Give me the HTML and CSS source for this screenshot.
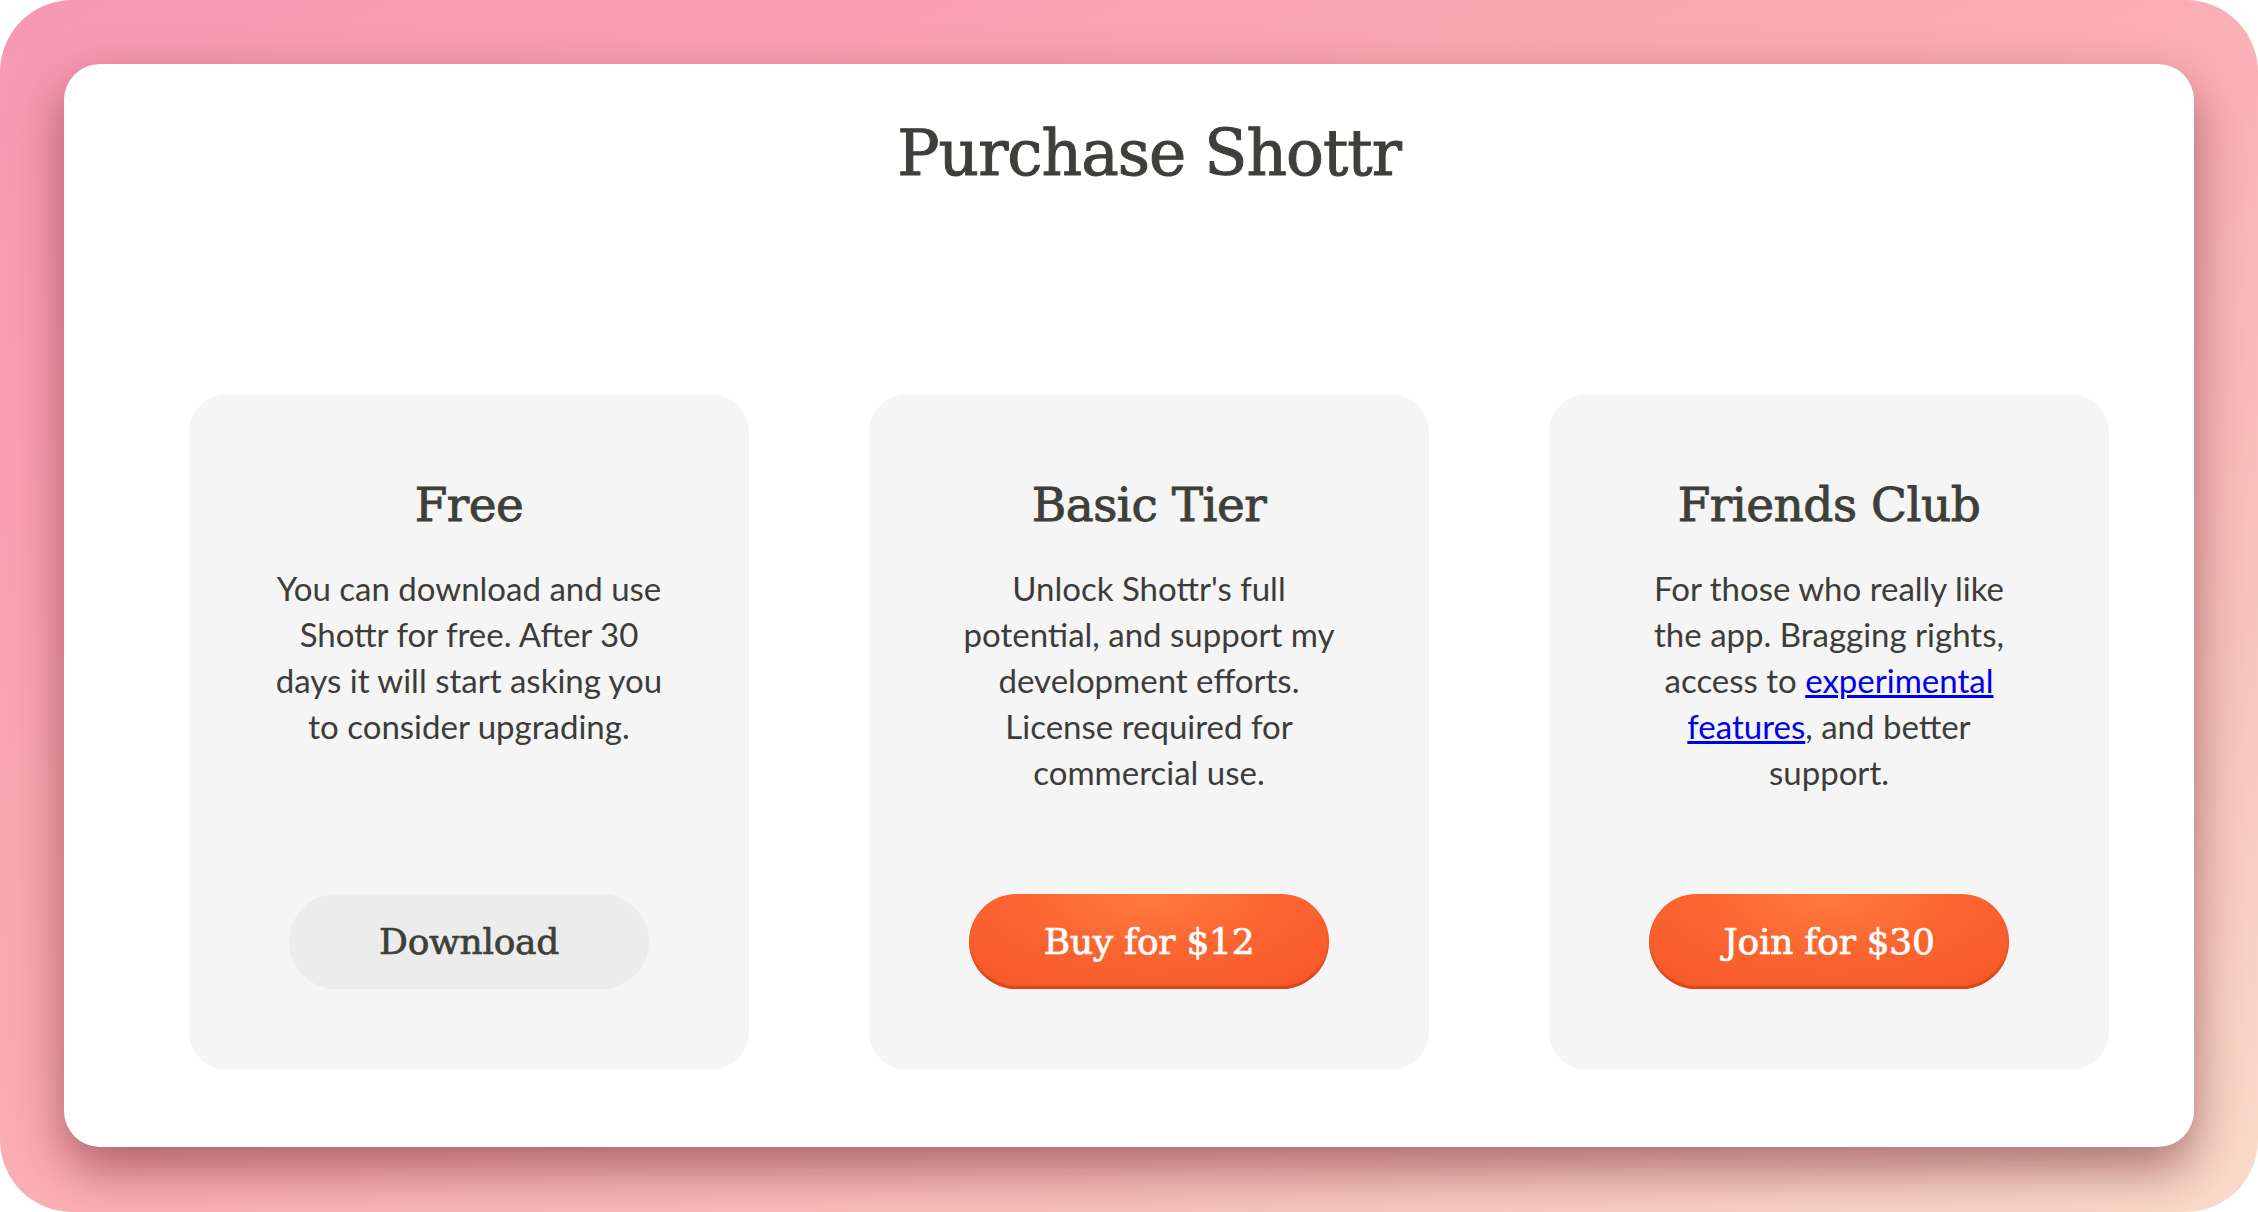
FILE: index.html
```html
<!DOCTYPE html>
<html lang="en">
<head>
<meta charset="utf-8">
<title>Purchase Shottr</title>
<link rel="stylesheet" href="styles.css">
</head>
<body>
<div class="frame">
  <div class="window">
    <h1 class="title">Purchase Shottr</h1>
    <div class="tiers">
      <div class="tier">
        <h2 class="tier-name">Free</h2>
        <p class="tier-text">You can download and use Shottr for free. After 30 days it will start asking you to consider upgrading.</p>
        <a class="btn btn-grey">Download</a>
      </div>
      <div class="tier">
        <h2 class="tier-name">Basic Tier</h2>
        <p class="tier-text">Unlock Shottr's full potential, and support my development efforts. License required for commercial use.</p>
        <a class="btn btn-orange">Buy for $12</a>
      </div>
      <div class="tier">
        <h2 class="tier-name">Friends Club</h2>
        <p class="tier-text">For those who really like the app. Bragging rights, access to <a class="link" href="#">experimental features</a>, and better support.</p>
        <a class="btn btn-orange">Join for $30</a>
      </div>
    </div>
  </div>
</div>
</body>
</html>
```

FILE: styles.css
```css
html, body {
  margin: 0;
  padding: 0;
  background: #ffffff;
}

.frame {
  width: 2258px;
  height: 1212px;
  box-sizing: border-box;
  padding: 64px 64px 65px 64px;
  border-radius: 72px;
  background: linear-gradient(to bottom right, #f798b1 0%, #fbabb4 45%, #f9c3bd 75%, #fadccb 100%);
  overflow: hidden;
}

.window {
  height: 100%;
  box-sizing: border-box;
  background: #ffffff;
  border-radius: 36px;
  box-shadow: 0 22px 50px rgba(110, 30, 40, 0.55);
  padding: 48px 85px 0 125px;
  display: flex;
  flex-direction: column;
}

.title {
  margin: 0;
  text-align: center;
  font-family: "DejaVu Serif", serif;
  font-weight: normal;
  font-size: 63px;
  line-height: 84px;
  color: #3e3f3a;
  letter-spacing: -1px;
  -webkit-text-stroke: 1px #3e3f3a;
}

.tiers {
  margin-top: 198px;
  display: grid;
  grid-template-columns: repeat(3, 560px);
  column-gap: 120px;
}

.tier {
  height: 676px;
  box-sizing: border-box;
  background: #f5f5f5;
  border-radius: 38px;
  padding: 81px 84px 81px;
  display: flex;
  flex-direction: column;
  align-items: center;
  text-align: center;
}

.tier-name {
  margin: 0;
  font-family: "DejaVu Serif", serif;
  font-weight: normal;
  font-size: 47px;
  line-height: 60px;
  color: #3e3f3a;
  letter-spacing: -0.5px;
  -webkit-text-stroke: 0.9px #3e3f3a;
}

.tier-text {
  margin: 30px 0 0;
  font-family: "Lato", "Open Sans", sans-serif;
  font-size: 33px;
  line-height: 46px;
  color: #3c3c3a;
}

.link {
  color: #0000ee;
  text-decoration: underline;
}

.btn {
  margin-top: auto;
  width: 360px;
  height: 95px;
  flex-shrink: 0;
  box-sizing: border-box;
  border-radius: 48px;
  display: flex;
  align-items: center;
  justify-content: center;
  font-family: "DejaVu Serif", serif;
  font-size: 36px;
  letter-spacing: -0.3px;
}

.btn-grey {
  background: #ececec;
  color: #3e3f3a;
  -webkit-text-stroke: 0.7px #3e3f3a;
}

.btn-orange {
  background: radial-gradient(ellipse 70% 120% at 50% 0%, #ff7b3e 0%, #fb6430 55%, #f85a2a 100%);
  color: #ffffff;
  -webkit-text-stroke: 0.7px #ffffff;
  box-shadow: inset 0 -3px 2px rgba(190, 50, 15, 0.55);
}
```
